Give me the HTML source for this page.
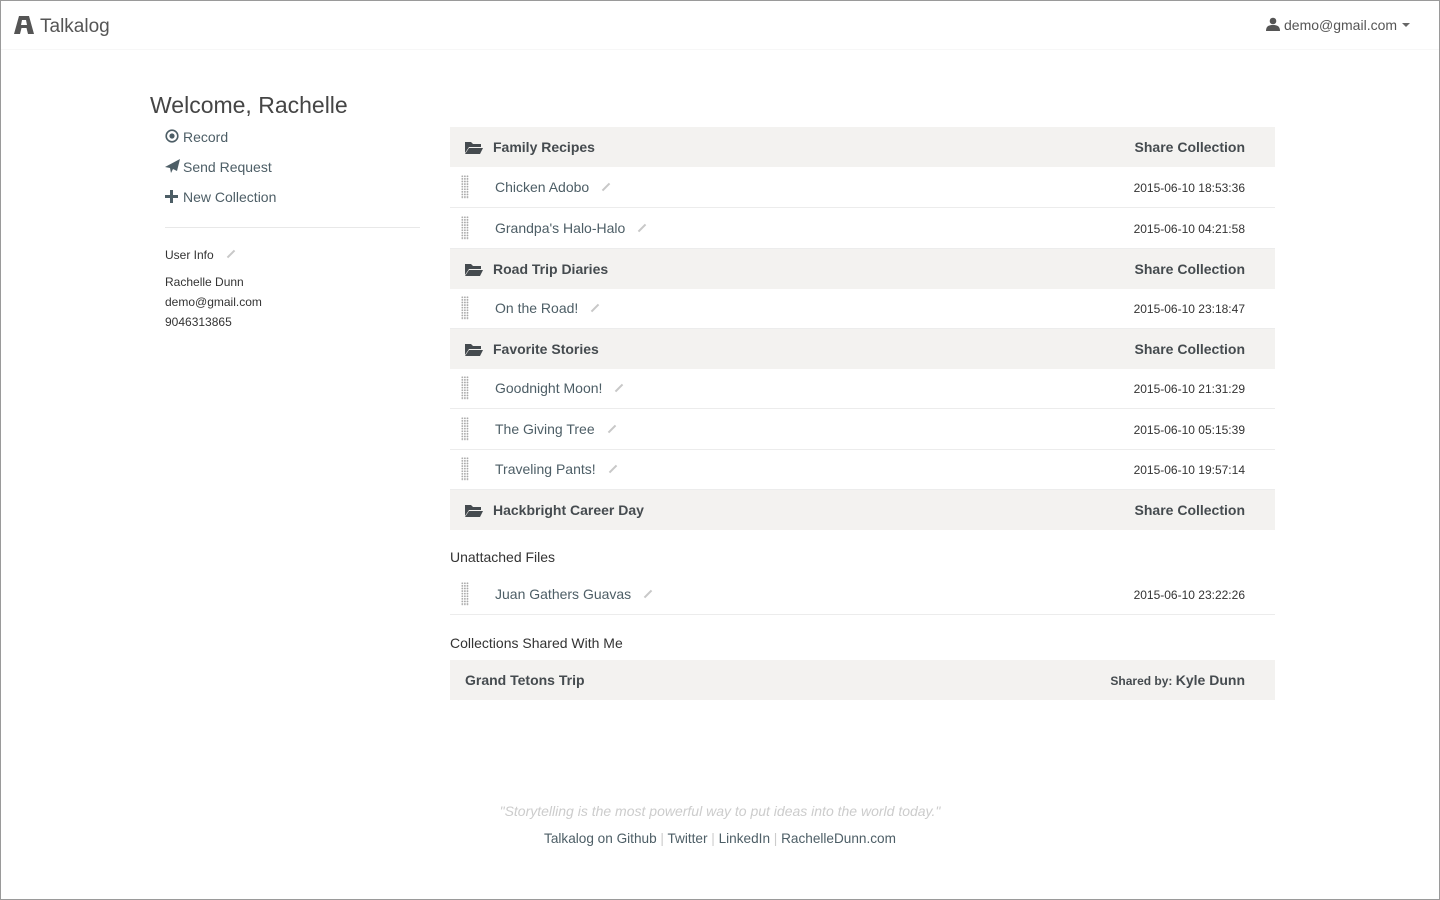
<!DOCTYPE html>
<html><head><meta charset="utf-8"><style>
*{box-sizing:border-box;margin:0;padding:0}
html,body{width:1440px;height:900px;overflow:hidden;background:#fff;font-family:"Liberation Sans",Arial,sans-serif;color:#333}
.frame{position:absolute;left:0;top:0;width:1440px;height:900px;border:1px solid #9a9a9a}
.abs{position:absolute}
.link{color:#4d5e66}
.hdr{position:absolute;left:450px;width:825px;height:40px;background:#f3f2f0;font-weight:bold;font-size:14px;color:#454b4f}
.hdr .t{position:absolute;left:43px;top:12px}
.hdr .s{position:absolute;right:30px;top:12px}
.row{position:absolute;left:450px;width:825px;height:41px;border-bottom:1px solid #ececec;font-size:14px}
.row .t{position:absolute;left:45px;top:12px;color:#4d5e66}
.row .d{position:absolute;right:30px;top:14px;font-size:12px;color:#333}
.grip{position:absolute;left:11px;top:8px;width:8px;height:24px;background-image:radial-gradient(circle,#aaa 0.8px,transparent 1px);background-size:2.6px 2.6px}
.pen{display:inline-block;width:10px;height:2px;background:#c8c8c8;transform:rotate(-45deg);margin-left:12px;vertical-align:4px}
.fold{position:absolute;left:15px;top:14px}
</style></head><body>
<div class="frame"></div>
<div class="abs" style="left:1px;right:1px;top:49px;height:1px;background:#f7f7f7"></div>
<svg class="abs" style="left:14px;top:16px" width="20" height="18" viewBox="0 0 20 18"><path d="M5 0h10l5 18h-6l-1.5-6h-5L6 18H0z M8 4h4l1 5H7z" fill="#555" fill-rule="evenodd"/></svg>
<div class="abs" style="left:40px;top:16px;font-size:19px;color:#555">Talkalog</div>
<svg class="abs" style="left:1266px;top:17px" width="14" height="14" viewBox="0 0 14 14"><circle cx="7" cy="4" r="3.3" fill="#555"/><path d="M0 14c0-5 3-6 7-6s7 1 7 6z" fill="#555"/></svg>
<div class="abs" style="left:1284px;top:17px;font-size:14px;color:#555">demo@gmail.com</div>
<div class="abs" style="left:1402px;top:23px;border-left:4px solid transparent;border-right:4px solid transparent;border-top:4px solid #666"></div>

<div class="abs" style="left:150px;top:92px;font-size:23px;color:#454545">Welcome, Rachelle</div>
<svg class="abs" style="left:165px;top:129px" width="14" height="14"><circle cx="7" cy="7" r="5.8" fill="none" stroke="#4d5e66" stroke-width="1.6"/><circle cx="7" cy="7" r="2.6" fill="#4d5e66"/></svg>
<div class="abs link" style="left:183px;top:129px;font-size:14px">Record</div>
<svg class="abs" style="left:165px;top:159px" width="15" height="14"><path d="M15 0L0 8l5 1 1 5 2-4 4 2z" fill="#4d5e66"/></svg>
<div class="abs link" style="left:183px;top:159px;font-size:14px">Send Request</div>
<div class="abs" style="left:165px;top:195px;width:13px;height:3px;background:#4d5e66"></div>
<div class="abs" style="left:170px;top:190px;width:3px;height:13px;background:#4d5e66"></div>
<div class="abs link" style="left:183px;top:189px;font-size:14px">New Collection</div>
<div class="abs" style="left:165px;top:227px;width:255px;height:1px;background:#e8e8e8"></div>
<div class="abs" style="left:165px;top:248px;font-size:12px;color:#333">User Info<span class="pen"></span></div>
<div class="abs" style="left:165px;top:272px;font-size:12px;line-height:20px;color:#333">Rachelle Dunn<br>demo@gmail.com<br>9046313865</div>

<div class="hdr" style="top:127px"><svg class="fold" width="18" height="13"><path d="M0 1h6l2 2h8v3H4L0 12z M4 7h14l-3 6H0z" fill="#454b4f"/></svg><span class="t">Family Recipes</span><span class="s">Share Collection</span></div>
<div class="row" style="top:167px"><div class="grip"></div><span class="t">Chicken Adobo<span class="pen"></span></span><span class="d">2015-06-10 18:53:36</span></div>
<div class="row" style="top:208px"><div class="grip"></div><span class="t">Grandpa's Halo-Halo<span class="pen"></span></span><span class="d">2015-06-10 04:21:58</span></div>
<div class="hdr" style="top:249px"><svg class="fold" width="18" height="13"><path d="M0 1h6l2 2h8v3H4L0 12z M4 7h14l-3 6H0z" fill="#454b4f"/></svg><span class="t">Road Trip Diaries</span><span class="s">Share Collection</span></div>
<div class="row" style="top:288px"><div class="grip"></div><span class="t">On the Road!<span class="pen"></span></span><span class="d">2015-06-10 23:18:47</span></div>
<div class="hdr" style="top:329px"><svg class="fold" width="18" height="13"><path d="M0 1h6l2 2h8v3H4L0 12z M4 7h14l-3 6H0z" fill="#454b4f"/></svg><span class="t">Favorite Stories</span><span class="s">Share Collection</span></div>
<div class="row" style="top:368px"><div class="grip"></div><span class="t">Goodnight Moon!<span class="pen"></span></span><span class="d">2015-06-10 21:31:29</span></div>
<div class="row" style="top:409px"><div class="grip"></div><span class="t">The Giving Tree<span class="pen"></span></span><span class="d">2015-06-10 05:15:39</span></div>
<div class="row" style="top:449px"><div class="grip"></div><span class="t">Traveling Pants!<span class="pen"></span></span><span class="d">2015-06-10 19:57:14</span></div>
<div class="hdr" style="top:490px"><svg class="fold" width="18" height="13"><path d="M0 1h6l2 2h8v3H4L0 12z M4 7h14l-3 6H0z" fill="#454b4f"/></svg><span class="t">Hackbright Career Day</span><span class="s">Share Collection</span></div>

<div class="abs" style="left:450px;top:549px;font-size:14px;color:#333">Unattached Files</div>
<div class="row" style="top:574px"><div class="grip"></div><span class="t">Juan Gathers Guavas<span class="pen"></span></span><span class="d">2015-06-10 23:22:26</span></div>
<div class="abs" style="left:450px;top:635px;font-size:14px;color:#333">Collections Shared With Me</div>
<div class="hdr" style="top:660px"><span class="t" style="left:15px">Grand Tetons Trip</span><span class="s"><span style="font-size:12px">Shared by: </span>Kyle Dunn</span></div>

<div class="abs" style="left:0;width:1440px;top:803px;text-align:center;font-size:14px;font-style:italic;color:#ccc">"Storytelling is the most powerful way to put ideas into the world today."</div>
<div class="abs" style="left:0;width:1440px;top:831px;text-align:center;font-size:13.6px;color:#4d5e66">Talkalog on Github <span style="color:#ccc">|</span> Twitter <span style="color:#ccc">|</span> LinkedIn <span style="color:#ccc">|</span> RachelleDunn.com</div>
</body></html>
